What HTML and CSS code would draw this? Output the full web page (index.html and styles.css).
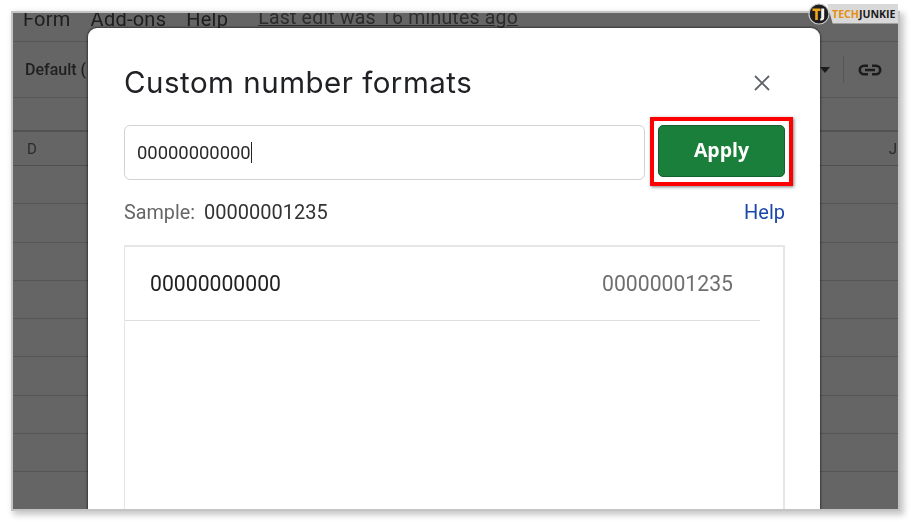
FILE: index.html
```html
<!DOCTYPE html>
<html lang="en">
<head>
<meta charset="utf-8">
<title>Custom number formats</title>
<link rel="stylesheet" href="styles.css">
</head>
<body>
<div class="frame">
  <div class="sheet">
    <div class="menubar">
      <span class="menu-item">Form</span>
      <span class="menu-item">Add-ons</span>
      <span class="menu-item">Help</span>
      <span class="last-edit">Last edit was 16 minutes ago</span>
    </div>
    <div class="toolbar">
      <span class="font-name">Default (</span>
      <span class="toolbar-right">
        <span class="caret"></span>
        <span class="divider"></span>
        <svg class="link-icon" viewBox="0 0 26 14" width="26" height="14"><path d="M7 1.5h4v2.6H7a2.9 2.9 0 0 0 0 5.8h4v2.6H7a5.500 5.500 0 0 1 0-11zM15 1.500h4a5.500 5.500 0 0 1 0 11h-4V9.900h4a2.900 2.900 0 0 0 0-5.800h-4zM8 5.700h10v2.600H8z" fill="#1c1c1c"/></svg>
      </span>
    </div>
    <div class="formula"></div>
    <div class="col-head"><span>D</span><span>J</span></div>
    <div class="row"></div><div class="row"></div><div class="row"></div><div class="row"></div>
    <div class="row"></div><div class="row"></div><div class="row"></div><div class="row"></div>
    <div class="row"></div>
  </div>

  <div class="modal">
    <div class="modal-head">
      <h1 class="title">Custom number formats</h1>
      <svg class="close" viewBox="0 0 16 16" width="16" height="16"><path d="M1 1l14 14M15 1L1 15" stroke="#5f6368" stroke-width="1.800" fill="none"/></svg>
    </div>
    <div class="entry">
      <div class="input">00000000000<span class="cursor"></span></div>
      <button class="apply">Apply</button>
      <div class="highlight"></div>
    </div>
    <div class="sample">
      <span class="sample-label">Sample:</span>
      <span class="sample-value">00000001235</span>
      <span class="help">Help</span>
    </div>
    <div class="list">
      <div class="list-row">
        <span class="fmt">00000000000</span>
        <span class="fmt-sample">00000001235</span>
      </div>
    </div>
  </div>
</div>
<div class="brand">
  <svg class="brand-mark" viewBox="0 0 22 22" width="22" height="22">
    <circle cx="11" cy="11" r="10" fill="#1d1d1f" stroke="#c9c9c9" stroke-width="1.200"/>
    <path d="M4.500 5.500h8v2.400H9.800V17H7.200V7.900H4.500z" fill="#f2a71b"/>
    <path d="M13.200 5.500h3v9c0 2.300-1.500 3.300-4 3v-2c1 .1 1 -.3 1 -1z" fill="#f4f4f4"/>
  </svg>
  <span class="brand-text"><span class="tech">TECH</span>JUNKIE</span>
</div>
</body>
</html>
```
FILE: styles.css
```css
* { box-sizing: border-box; }
html, body { margin: 0; padding: 0; background: #fff; }
body { width: 911px; height: 522px; overflow: hidden; position: relative; font-family: Roboto, "Liberation Sans", sans-serif; padding-top: 13px; }

.frame {
  position: relative;
  margin: 0 0 0 13px;
  width: 885px;
  height: 496px;
  overflow: hidden;
  background: #656565;
  outline: 2px solid #c4c4c4;
  box-shadow: 3px 3px 6px 3px rgba(0,0,0,.22);
}

.sheet { display: flex; flex-direction: column; color: #222; filter: blur(.35px); }
.menubar {
  height: 29px; border-bottom: 1px solid #565656;
  display: flex; align-items: flex-start; padding-left: 10px;
  font-size: 20px; line-height: 22px; color: #1d1d1d;
}
.menu-item { margin-right: 20px; letter-spacing: .25px; margin-top: -5px; }
.last-edit { margin-left: 10px; margin-top: -6px; color: #2c2c2c; text-decoration: underline; font-size: 19.5px; letter-spacing: .2px; white-space: nowrap; }
.toolbar {
  height: 56px; border-bottom: 1px solid #575757;
  display: flex; align-items: center; justify-content: space-between;
  padding: 0 15px 0 12px; font-size: 16px; font-weight: 500; color: #1f1f1f;
}
.toolbar-right { display: flex; align-items: center; }
.caret { width: 0; height: 0; border: 5px solid transparent; border-top: 6px solid #1c1c1c; border-bottom: 0; margin-right: 13px; }
.divider { width: 1px; height: 27px; background: #575757; margin-right: 13px; }
.link-icon { display: block; }
.formula { height: 34px; border-bottom: 2px solid #525252; }
.col-head {
  height: 34px; border-bottom: 1px solid #4f4f4f;
  display: flex; justify-content: space-between; align-items: center;
  padding: 0 1px 0 14px; font-size: 15px; color: #2b2b2b;
}
.row { height: 38.3px; border-bottom: 1px solid #565656; flex: none; }

.modal {
  position: absolute; left: 75px; top: 15px; width: 732px; height: 520px;
  background: #fff; border-radius: 9px 9px 0 0;
  padding: 0 35px 0 36px;
  box-shadow: 0 0 2px 1px rgba(0,0,0,.45);
}
.modal-head { height: 82px; display: flex; align-items: center; justify-content: space-between; padding-right: 15px; }
.title { margin: 0; font-family: Inter, sans-serif; font-weight: 400; font-size: 29.5px; letter-spacing: .5px; color: #202124; filter: blur(.3px); padding-top: 27px; height: 82px; line-height: 55px; white-space: nowrap; }
.close { display: block; margin-top: 27px; }
.entry { position: relative; display: flex; gap: 13px; height: 55px; margin-top: 15px; align-items: flex-start; }
.input {
  width: 521px; height: 55px; border: 1px solid #d2d2d2; border-radius: 6px;
  padding-left: 12px; display: flex; align-items: center;
  font-size: 18.4px; color: #2a2a2a; filter: blur(.3px);
}
.cursor { display: inline-block; width: 1px; height: 21px; background: #222; }
.apply {
  width: 127px; height: 52px; border: 1px solid #15602f; border-radius: 5px;
  background: #1a7f3a; color: #fff; font: 700 19.5px "Open Sans", sans-serif; padding: 0 0 4px;
  filter: blur(.3px);
}
.highlight {
  position: absolute; left: 526px; top: -8px; width: 143px; height: 69px;
  border: 4px solid #f00; box-shadow: 1px 1px 3px rgba(0,0,0,.5);
}
.sample { display: flex; align-items: center; height: 26px; margin-top: 19px; font-size: 20px; filter: blur(.3px); }
.sample-label { color: #666; font-size: 19.8px; margin-right: 9px; }
.sample-value { color: #333; }
.help { margin-left: auto; color: #1a47a8; }
.list { margin-top: 20px; height: 300px; border: 2px solid #e6e6e6; border-left-width: 1px; padding-right: 23px; }
.list-row {
  height: 74px; border-bottom: 1px solid #dedede;
  display: flex; align-items: center; justify-content: space-between;
  padding: 0 27px 0 25px; font-size: 21.2px; filter: blur(.3px);
}
.fmt { color: #222; }
.fmt-sample { color: #6f6f6f; }

.brand {
  position: absolute; left: 808px; top: 3px; width: 90px; height: 21px;
  display: flex; align-items: center;
}
.brand-mark { display: block; flex: none; position: relative; z-index: 1; }
.brand-text {
  margin-left: -3px; height: 20px; flex: 1; background: #d9d9d9;
  clip-path: polygon(0 0, 100% 0, 100% 100%, 8% 100%);
  font: 700 10.6px/20px "Open Sans", sans-serif; color: #1b1b1b; padding-left: 5px; white-space: nowrap;
}
.tech { color: #e58e0c; }
```
